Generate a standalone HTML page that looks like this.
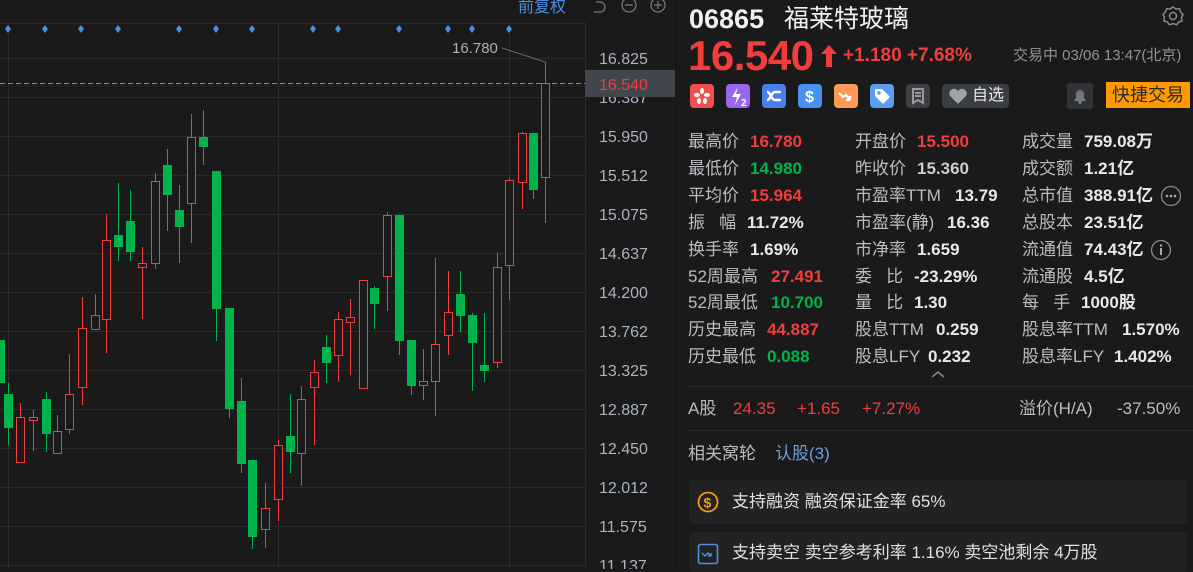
<!DOCTYPE html>
<html><head><meta charset="utf-8">
<style>
*{margin:0;padding:0;box-sizing:border-box}
body{width:1193px;height:569px;background:#1a1a1a;overflow:hidden;position:relative;font-family:"Liberation Sans","Noto Sans CJK SC",sans-serif;color:#e8e8e8;line-height:20px}
.a{position:absolute;white-space:nowrap}
.r{color:#f23d3d}.g{color:#00b34a}.gr{color:#a5a9ae}
.lab{color:#b9bcc0;font-size:17px;line-height:20px}
.val{font-weight:bold;font-size:17px;line-height:20px}
.ic{position:absolute;top:84px;width:24px;height:24px;border-radius:4px}
</style></head><body>
<svg class="a" style="left:0;top:0" width="680" height="569" xmlns="http://www.w3.org/2000/svg">
<g stroke="#2b2b2b" stroke-width="1">
<line x1="0" y1="23.5" x2="585" y2="23.5"/>
<line x1="0" y1="58.5" x2="585" y2="58.5"/><line x1="0" y1="97.5" x2="585" y2="97.5"/><line x1="0" y1="136.5" x2="585" y2="136.5"/><line x1="0" y1="175.5" x2="585" y2="175.5"/><line x1="0" y1="214.5" x2="585" y2="214.5"/><line x1="0" y1="253.5" x2="585" y2="253.5"/><line x1="0" y1="292.5" x2="585" y2="292.5"/><line x1="0" y1="331.5" x2="585" y2="331.5"/><line x1="0" y1="370.5" x2="585" y2="370.5"/><line x1="0" y1="409.5" x2="585" y2="409.5"/><line x1="0" y1="448.5" x2="585" y2="448.5"/><line x1="0" y1="487.5" x2="585" y2="487.5"/><line x1="0" y1="526.5" x2="585" y2="526.5"/><line x1="0" y1="565.5" x2="585" y2="565.5"/>
<line x1="8.5" y1="23" x2="8.5" y2="569"/><line x1="278.5" y1="23" x2="278.5" y2="569"/><line x1="509.5" y1="23" x2="509.5" y2="569"/><line x1="585.5" y1="23" x2="585.5" y2="569"/>
</g>
<g fill="#4a90e2">
<path d="M8 25l3 4-3 4-3-4z"/><path d="M45 25l3 4-3 4-3-4z"/><path d="M81 25l3 4-3 4-3-4z"/><path d="M118 25l3 4-3 4-3-4z"/><path d="M179 25l3 4-3 4-3-4z"/><path d="M216 25l3 4-3 4-3-4z"/><path d="M252 25l3 4-3 4-3-4z"/><path d="M313 25l3 4-3 4-3-4z"/><path d="M338 25l3 4-3 4-3-4z"/><path d="M399 25l3 4-3 4-3-4z"/><path d="M448 25l3 4-3 4-3-4z"/><path d="M472 25l3 4-3 4-3-4z"/><path d="M509 25l3 4-3 4-3-4z"/>
</g>
<g id="c"></g>
<line x1="0" y1="83.5" x2="585" y2="83.5" stroke="#d9731f" stroke-dasharray="5,3"/>
<line x1="502" y1="48" x2="545" y2="62" stroke="#666"/>
<text x="452" y="53" fill="#b0b0b0" font-size="15" font-family="Liberation Sans">16.780</text>
<g fill="#a9b3c1" font-size="16" font-family="Liberation Sans">
<text x="599" y="64">16.825</text><text x="599" y="103">16.387</text><text x="599" y="142">15.950</text><text x="599" y="181">15.512</text><text x="599" y="220">15.075</text><text x="599" y="259">14.637</text><text x="599" y="298">14.200</text><text x="599" y="337">13.762</text><text x="599" y="376">13.325</text><text x="599" y="415">12.887</text><text x="599" y="454">12.450</text><text x="599" y="493">12.012</text><text x="599" y="532">11.575</text><text x="599" y="571">11.137</text>
</g>
<rect x="585" y="70" width="90" height="27" fill="#40464c"/>
<text x="599" y="90" fill="#f23d3d" font-size="16" font-family="Liberation Sans">16.540</text>
<text x="518" y="12" fill="#4a8fe0" font-size="16" font-family="Liberation Sans,Noto Sans CJK SC">前复权</text>
<g stroke="#777" fill="none" stroke-width="1.3">
<path d="M596 2h4a5 5 0 0 1 0 10h-6"/>
<circle cx="629" cy="5" r="7"/><line x1="625" y1="5" x2="633" y2="5"/>
<circle cx="658" cy="5" r="7"/><line x1="654" y1="5" x2="662" y2="5"/><line x1="658" y1="1" x2="658" y2="9"/>
</g>
</svg>
<script>
var d=[[0,340,383,340,383,'g'],[8,394,428,383,445,'g'],[20,417,462,403,463,'r'],[33,417,420,410,451,'r'],[46,399,434,392,452,'g'],[57,431,453,415,453,'r'],[69,394,429,354,434,'r'],[82,328,387,297,405,'r'],[95,315,329,294,330,'r'],[106,240,319,214,353,'r'],[118,235,247,183,261,'g'],[130,221,252,190,261,'g'],[142,263,267,247,319,'r'],[155,181,263,173,269,'r'],[167,165,195,149,231,'g'],[179,210,227,185,263,'g'],[191,137,203,114,243,'r'],[203,137,147,110,165,'g'],[216,171,309,171,341,'g'],[229,308,409,308,418,'g'],[241,401,464,378,473,'g'],[252,460,537,460,549,'g'],[265,508,529,483,548,'r'],[278,445,499,440,521,'r'],[290,436,452,394,473,'g'],[301,399,453,386,486,'r'],[314,372,387,360,445,'r'],[326,347,363,335,383,'g'],[338,319,355,312,382,'r'],[350,317,322,299,375,'r'],[363,280,388,280,388,'r'],[374,288,304,286,329,'g'],[387,215,276,212,311,'r'],[399,215,341,215,355,'g'],[411,340,386,340,395,'g'],[423,381,385,349,400,'r'],[435,344,381,258,416,'r'],[448,312,335,271,355,'r'],[460,294,316,271,332,'g'],[472,315,343,313,391,'g'],[484,365,371,313,382,'g'],[497,267,362,253,368,'r'],[509,180,265,178,300,'r'],[522,133,182,132,209,'r'],[533,133,190,133,199,'g'],[545,83,177,62,223,'r']];
var s='';d.forEach(function(c){var col=c[5]=='r'?'#f23d3d':'#00b34a';var x=c[0];
s+='<line x1="'+(x+.5)+'" y1="'+c[3]+'" x2="'+(x+.5)+'" y2="'+c[4]+'" stroke="'+col+'"/>';
if(c[5]=='r')s+='<rect x="'+(x-3.5)+'" y="'+(c[1]+.5)+'" width="8" height="'+Math.max(c[2]-c[1],2)+'" fill="#1a1a1a" stroke="'+col+'"/>';
else s+='<rect x="'+(x-4)+'" y="'+c[1]+'" width="9" height="'+Math.max(c[2]-c[1],2)+'" fill="'+col+'"/>';});
document.getElementById('c').innerHTML=s;
</script>

<div class="a" style="left:676px;top:0;width:1px;height:569px;background:#151515"></div>
<div class="a" style="left:689px;top:3px;font-size:27px;line-height:32px;font-weight:bold;color:#f0f0f0">06865</div>
<div class="a" style="left:784px;top:3px;font-size:25px;line-height:32px;color:#f0f0f0">福莱特玻璃</div>
<svg class="a" style="left:1162px;top:5px" width="22" height="22"><path d="M11 2l3 2 3.5-.3 1 3.3 2.5 2.5-1.5 3 .5 3.5-3.3 1-2.2 2.8-3.5-1.2-3.5 1.2-2.2-2.8-3.3-1 .5-3.5-1.5-3 2.5-2.5 1-3.3 3.5.3z" fill="none" stroke="#888" stroke-width="1.5"/><circle cx="11" cy="11" r="3.5" fill="none" stroke="#888" stroke-width="1.5"/></svg>
<div class="a r" style="left:688px;top:33px;font-size:42px;line-height:46px;font-weight:bold;letter-spacing:-0.5px">16.540</div>
<svg class="a" style="left:820px;top:44px" width="18" height="24"><path d="M9 1l8 9h-5v13h-6v-13h-5z" fill="#f23d3d"/></svg>
<div class="a r" style="left:843px;top:45px;font-size:19px;line-height:22px;font-weight:bold">+1.180 +7.68%</div>
<div class="a gr" style="left:1013px;top:46px;font-size:15px;line-height:20px;color:#8e9297">交易中 03/06 13:47(北京)</div>

<div class="ic" style="left:690px;background:#f25050"><svg width="24" height="24"><g fill="#fff"><ellipse cx="12" cy="7" rx="2" ry="3"/><ellipse cx="7" cy="11" rx="3" ry="2"/><ellipse cx="17" cy="11" rx="3" ry="2"/><ellipse cx="9" cy="17" rx="2" ry="3"/><ellipse cx="15" cy="17" rx="2" ry="3"/></g></svg></div>
<div class="ic" style="left:726px;background:#9966ee"><svg width="24" height="24"><path d="M12 3l-6 10h5l-2 8 6-11h-5z" fill="#fff"/><text x="15" y="22" fill="#fff" font-size="10" font-weight="bold" font-family="Liberation Sans">2</text></svg></div>
<div class="ic" style="left:762px;background:#4a7ff0"><svg width="24" height="24"><path d="M5 8c4 0 4 8 8 8h6M5 16c4 0 4-8 8-8h6" stroke="#fff" stroke-width="2.4" fill="none"/></svg></div>
<div class="ic" style="left:798px;background:#4a90f0"><svg width="24" height="24"><text x="7" y="18" fill="#fff" font-size="16" font-weight="bold" font-family="Liberation Sans">$</text></svg></div>
<div class="ic" style="left:834px;background:#ff9955"><svg width="24" height="24"><path d="M5 9l4 4 3-2 4 5m0 0v-4m0 4h-4" stroke="#fff" stroke-width="2.2" fill="none"/></svg></div>
<div class="ic" style="left:870px;background:#5a9df5"><svg width="24" height="24"><path d="M5 5h7l8 8-7 7-8-8z" fill="#fff"/><circle cx="9" cy="9" r="1.8" fill="#5a9df5"/></svg></div>
<div class="ic" style="left:906px;background:#3c4046"><svg width="24" height="24"><path d="M7 5h10v14l-5-3-5 3z" fill="none" stroke="#999" stroke-width="2"/><path d="M9 9h6M9 12h6" stroke="#999" stroke-width="2"/></svg></div>
<div class="a" style="left:942px;top:84px;width:67px;height:24px;background:#3a3e44;border-radius:4px"><svg class="a" style="left:6px;top:4px" width="20" height="17"><path d="M10 16L2 8a4.5 4.5 0 0 1 8-5 4.5 4.5 0 0 1 8 5z" fill="#a0a4a9"/></svg><span class="a" style="left:30px;top:2px;font-size:16px;line-height:20px;color:#e8e8e8">自选</span></div>
<div class="a" style="left:1067px;top:83px;width:26px;height:26px;background:#2f3236;border-radius:3px"><svg width="26" height="26"><path d="M7 18h12l-2-3v-4a4 4 0 0 0-8 0v4z" fill="#777"/><circle cx="13" cy="19" r="2" fill="#777"/></svg></div>
<div class="a" style="left:1106px;top:82px;width:84px;height:26px;background:#ff9900;color:#2a2a2a;font-size:18px;text-align:center;line-height:26px">快捷交易</div>

<div class="a lab" style="left:688px;top:132px">最高价</div><div class="a val r" style="left:750px;top:132px">16.780</div>
<div class="a lab" style="left:688px;top:159px">最低价</div><div class="a val g" style="left:750px;top:159px">14.980</div>
<div class="a lab" style="left:688px;top:186px">平均价</div><div class="a val r" style="left:750px;top:186px">15.964</div>
<div class="a lab" style="left:688px;top:213px">振&nbsp;&nbsp;&nbsp;幅</div><div class="a val" style="left:747px;top:213px">11.72%</div>
<div class="a lab" style="left:688px;top:240px">换手率</div><div class="a val" style="left:750px;top:240px">1.69%</div>
<div class="a lab" style="left:688px;top:267px">52周最高</div><div class="a val r" style="left:771px;top:267px">27.491</div>
<div class="a lab" style="left:688px;top:293px">52周最低</div><div class="a val g" style="left:771px;top:293px">10.700</div>
<div class="a lab" style="left:688px;top:320px">历史最高</div><div class="a val r" style="left:767px;top:320px">44.887</div>
<div class="a lab" style="left:688px;top:347px">历史最低</div><div class="a val g" style="left:767px;top:347px">0.088</div>

<div class="a lab" style="left:855px;top:132px">开盘价</div><div class="a val r" style="left:917px;top:132px">15.500</div>
<div class="a lab" style="left:855px;top:159px">昨收价</div><div class="a val" style="left:917px;top:159px;color:#ccc">15.360</div>
<div class="a lab" style="left:855px;top:186px">市盈率TTM</div><div class="a val" style="left:955px;top:186px">13.79</div>
<div class="a lab" style="left:855px;top:213px">市盈率(静)</div><div class="a val" style="left:947px;top:213px">16.36</div>
<div class="a lab" style="left:855px;top:240px">市净率</div><div class="a val" style="left:917px;top:240px">1.659</div>
<div class="a lab" style="left:855px;top:267px">委&nbsp;&nbsp;&nbsp;比</div><div class="a val" style="left:914px;top:267px">-23.29%</div>
<div class="a lab" style="left:855px;top:293px">量&nbsp;&nbsp;&nbsp;比</div><div class="a val" style="left:914px;top:293px">1.30</div>
<div class="a lab" style="left:855px;top:320px">股息TTM</div><div class="a val" style="left:936px;top:320px">0.259</div>
<div class="a lab" style="left:855px;top:347px">股息LFY</div><div class="a val" style="left:928px;top:347px">0.232</div>
<svg class="a" style="left:930px;top:370px" width="16" height="8"><path d="M2 7l6-5 6 5" stroke="#888" stroke-width="1.5" fill="none"/></svg>

<div class="a lab" style="left:1022px;top:132px">成交量</div><div class="a val" style="left:1084px;top:132px">759.08万</div>
<div class="a lab" style="left:1022px;top:159px">成交额</div><div class="a val" style="left:1084px;top:159px">1.21亿</div>
<div class="a lab" style="left:1022px;top:186px">总市值</div><div class="a val" style="left:1084px;top:186px">388.91亿</div>
<svg class="a" style="left:1160px;top:185px" width="22" height="22"><circle cx="11" cy="11" r="9.5" fill="none" stroke="#888" stroke-width="1.3"/><circle cx="7" cy="11" r="1.3" fill="#aaa"/><circle cx="11" cy="11" r="1.3" fill="#aaa"/><circle cx="15" cy="11" r="1.3" fill="#aaa"/></svg>
<div class="a lab" style="left:1022px;top:213px">总股本</div><div class="a val" style="left:1084px;top:213px">23.51亿</div>
<div class="a lab" style="left:1022px;top:240px">流通值</div><div class="a val" style="left:1084px;top:240px">74.43亿</div>
<svg class="a" style="left:1150px;top:239px" width="22" height="22"><circle cx="11" cy="11" r="9.5" fill="none" stroke="#888" stroke-width="1.3"/><rect x="10" y="9" width="2" height="7" fill="#aaa"/><circle cx="11" cy="6.5" r="1.2" fill="#aaa"/></svg>
<div class="a lab" style="left:1022px;top:267px">流通股</div><div class="a val" style="left:1084px;top:267px">4.5亿</div>
<div class="a lab" style="left:1022px;top:293px">每&nbsp;&nbsp;&nbsp;手</div><div class="a val" style="left:1081px;top:293px">1000股</div>
<div class="a lab" style="left:1022px;top:320px">股息率TTM</div><div class="a val" style="left:1122px;top:320px">1.570%</div>
<div class="a lab" style="left:1022px;top:347px">股息率LFY</div><div class="a val" style="left:1114px;top:347px">1.402%</div>

<div class="a" style="left:688px;top:386px;width:816px;height:1px;background:#2a2a2a"></div>
<div class="a lab" style="left:688px;top:399px">A股</div>
<div class="a r" style="left:733px;top:399px;font-size:17px">24.35</div>
<div class="a r" style="left:797px;top:399px;font-size:17px">+1.65</div>
<div class="a r" style="left:862px;top:399px;font-size:17px">+7.27%</div>
<div class="a lab" style="left:1019px;top:399px">溢价(H/A)</div>
<div class="a lab" style="left:1117px;top:399px">-37.50%</div>
<div class="a" style="left:688px;top:430px;width:816px;height:1px;background:#2a2a2a"></div>
<div class="a lab" style="left:688px;top:444px">相关窝轮</div>
<div class="a" style="left:775px;top:444px;font-size:17px;color:#6d9ddb">认股(3)</div>

<div class="a" style="left:689px;top:480px;width:498px;height:44px;background:#222;border-radius:4px"></div>
<svg class="a" style="left:697px;top:491px" width="22" height="22"><circle cx="11" cy="11" r="9.5" fill="none" stroke="#f59a0c" stroke-width="1.8"/><text x="6.5" y="16.5" fill="#f59a0c" font-size="14" font-weight="bold" font-family="Liberation Sans">$</text></svg>
<div class="a" style="left:732px;top:492px;font-size:17px;color:#e0e0e0">支持融资 融资保证金率 65%</div>
<div class="a" style="left:689px;top:532px;width:498px;height:40px;background:#222;border-radius:4px"></div>
<svg class="a" style="left:697px;top:543px" width="22" height="22"><rect x="1.5" y="1.5" width="19" height="19" rx="2" fill="none" stroke="#4a8fe0" stroke-width="1.6"/><path d="M5 10l3 3 3-3 3 3m0 0v-3m0 3h-3" stroke="#4a8fe0" stroke-width="1.5" fill="none"/></svg>
<div class="a" style="left:732px;top:543px;font-size:17px;color:#e0e0e0">支持卖空 卖空参考利率 1.16% 卖空池剩余 4万股</div>
</body></html>
